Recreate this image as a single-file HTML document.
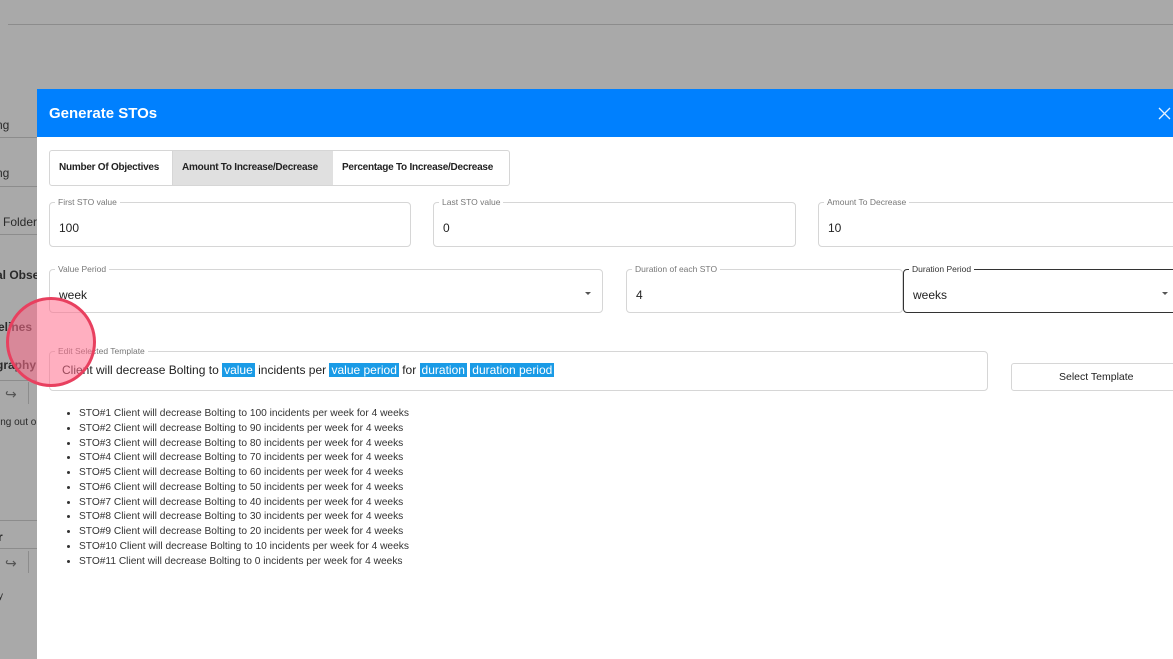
<!DOCTYPE html>
<html><head><meta charset="utf-8"><style>
*{box-sizing:border-box;margin:0;padding:0}
body{width:1173px;height:655px;overflow:hidden;background:#a9a9a9;font-family:"Liberation Sans",sans-serif;position:relative;color:#222}
.a{position:absolute}
.bgt{position:absolute;font-size:12px;color:#2a2a2a;white-space:nowrap}
.modal{position:absolute;left:37px;top:89px;width:1140px;height:570px;background:#fff}
.hdr{position:absolute;left:0;top:0;width:100%;height:48px;background:#0080fe;color:#fff;font-weight:bold;font-size:15px;padding:16px 0 0 12px}
.fld{position:absolute;border:1px solid #d6d6d6;border-radius:4px}
.fld .lb{position:absolute;top:-6px;left:5px;background:#fff;padding:0 3px;font-size:8.5px;color:#777}
.fld .v{position:absolute;left:9px;font-size:12px;color:#222}
.caret{position:absolute;width:0;height:0;border-left:3px solid transparent;border-right:3px solid transparent;border-top:3px solid #555}
.chip{background:#1a9be6;color:#fff;padding:0 2px}
ul{position:absolute;left:42px;top:407px;font-size:10.2px;line-height:14.75px;color:#333;list-style:disc;padding-left:37px}
.tab{position:absolute;top:0;height:34px;padding:11px 0 0 9px;font-size:10px;letter-spacing:-0.25px;white-space:nowrap}
</style></head><body>
<div class="a" style="left:8px;top:24px;width:1165px;height:1px;background:#8c8c8c"></div>
<div class="bgt" style="left:-4px;top:118px">ng</div>
<div class="a" style="left:0;top:137px;width:37px;height:1px;background:#8c8c8c"></div>
<div class="bgt" style="left:-4px;top:166px">ng</div>
<div class="a" style="left:0;top:186px;width:37px;height:1px;background:#8c8c8c"></div>
<div class="bgt" style="left:3px;top:215px">Folder</div>
<div class="a" style="left:0;top:234px;width:37px;height:1px;background:#8c8c8c"></div>
<div class="bgt" style="left:-4px;top:268px;font-weight:bold">al Obser</div>
<div class="bgt" style="left:-2px;top:320px;font-weight:bold">elines</div>
<div class="bgt" style="left:-4px;top:358px;font-weight:bold">graphy</div>
<div class="a" style="left:0;top:380px;width:37px;height:1px;background:#8c8c8c"></div>
<div class="bgt" style="left:5px;top:386px;font-size:14px;color:#555">↪</div>
<div class="a" style="left:28px;top:382px;width:1px;height:22px;background:#8c8c8c"></div>
<div class="bgt" style="left:-2px;top:417px;font-size:10px">ing out o</div>
<div class="a" style="left:0;top:520px;width:37px;height:1px;background:#8c8c8c"></div>
<div class="bgt" style="left:-2px;top:530px;font-weight:bold">r</div>
<div class="a" style="left:0;top:548px;width:37px;height:1px;background:#8c8c8c"></div>
<div class="bgt" style="left:5px;top:555px;font-size:14px;color:#555">↪</div>
<div class="a" style="left:28px;top:551px;width:1px;height:22px;background:#8c8c8c"></div>
<div class="bgt" style="left:-2px;top:591px;font-size:10px">y</div>

<div class="modal">
<div class="hdr">Generate STOs</div>
<svg class="a" style="left:1121px;top:18px" width="13" height="13"><path d="M1 1L12 12M12 1L1 12" stroke="#e8f2ff" stroke-width="1.3"/></svg>
</div>

<div class="a" style="left:49px;top:150px;width:461px;height:36px;border:1px solid #d6d6d6;border-radius:3px;font-weight:bold;color:#222">
<div class="tab" style="left:0;width:122px">Number Of Objectives</div>
<div class="tab" style="left:122px;width:161px;background:#e0e0e0;border-left:1px solid #d6d6d6">Amount To Increase/Decrease</div>
<div class="tab" style="left:283px;width:176px">Percentage To Increase/Decrease</div>
</div>

<div class="fld" style="left:49px;top:202px;width:362px;height:45px"><span class="lb">First STO value</span><span class="v" style="top:18px">100</span></div>
<div class="fld" style="left:433px;top:202px;width:363px;height:45px"><span class="lb">Last STO value</span><span class="v" style="top:18px">0</span></div>
<div class="fld" style="left:818px;top:202px;width:370px;height:45px"><span class="lb">Amount To Decrease</span><span class="v" style="top:18px">10</span></div>

<div class="fld" style="left:49px;top:269px;width:554px;height:44px"><span class="lb">Value Period</span><span class="v" style="top:18px">week</span><div class="caret" style="left:535px;top:22px"></div></div>
<div class="fld" style="left:626px;top:269px;width:277px;height:44px"><span class="lb">Duration of each STO</span><span class="v" style="top:18px">4</span></div>
<div class="fld" style="left:903px;top:269px;width:290px;height:44px;border-color:#333"><span class="lb" style="color:#333">Duration Period</span><span class="v" style="top:18px">weeks</span><div class="caret" style="left:258px;top:22px"></div></div>

<div class="fld" style="left:49px;top:351px;width:939px;height:40px"><span class="lb">Edit Selected Template</span>
<span class="v" style="top:11px;left:12px;font-size:12px;white-space:nowrap">Client will decrease Bolting to <span class="chip">value</span> incidents per <span class="chip">value period</span> for <span class="chip">duration</span> <span class="chip">duration period</span></span></div>

<div class="a" style="left:1011px;top:363px;width:180px;height:28px;border:1px solid #d6d6d6;border-radius:3px;font-size:10.5px;padding:7px 0 0 47px;color:#222">Select Template</div>

<ul>
<li>STO#1 Client will decrease Bolting to 100 incidents per week for 4 weeks</li>
<li>STO#2 Client will decrease Bolting to 90 incidents per week for 4 weeks</li>
<li>STO#3 Client will decrease Bolting to 80 incidents per week for 4 weeks</li>
<li>STO#4 Client will decrease Bolting to 70 incidents per week for 4 weeks</li>
<li>STO#5 Client will decrease Bolting to 60 incidents per week for 4 weeks</li>
<li>STO#6 Client will decrease Bolting to 50 incidents per week for 4 weeks</li>
<li>STO#7 Client will decrease Bolting to 40 incidents per week for 4 weeks</li>
<li>STO#8 Client will decrease Bolting to 30 incidents per week for 4 weeks</li>
<li>STO#9 Client will decrease Bolting to 20 incidents per week for 4 weeks</li>
<li>STO#10 Client will decrease Bolting to 10 incidents per week for 4 weeks</li>
<li>STO#11 Client will decrease Bolting to 0 incidents per week for 4 weeks</li>
</ul>

<div class="a" style="left:6px;top:297px;width:90px;height:90px;border-radius:50%;border:3px solid #e8405f;background:rgba(255,110,140,0.55)"></div>
</body></html>
